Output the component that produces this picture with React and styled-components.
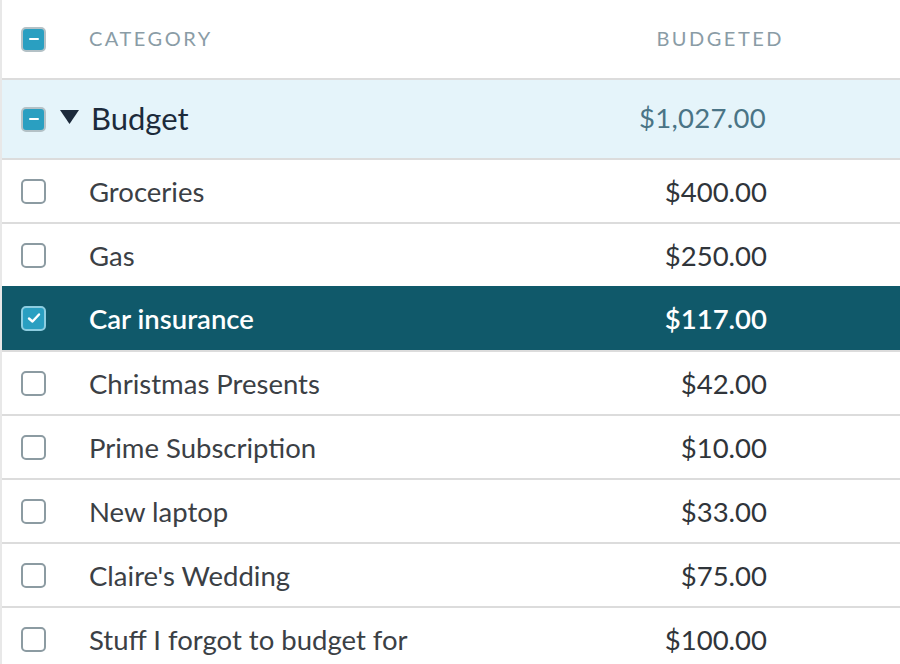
import React from 'react'
import styled, { createGlobalStyle } from 'styled-components'

const Global = createGlobalStyle`
  body {
    margin: 0;
    background: #fff;
    font-family: Lato, "Open Sans", sans-serif;
  }
`

const items = [
  { name: 'Groceries', amount: '$400.00' },
  { name: 'Gas', amount: '$250.00' },
  { name: 'Car insurance', amount: '$117.00', selected: true },
  { name: 'Christmas Presents', amount: '$42.00' },
  { name: 'Prime Subscription', amount: '$10.00' },
  { name: 'New laptop', amount: '$33.00' },
  { name: "Claire's Wedding", amount: '$75.00' },
  { name: 'Stuff I forgot to budget for', amount: '$100.00' },
]

export default function App() {
  return (
    <>
      <Global />
      <Table>
        <HeaderRow>
          <Box $state="partial"><Minus /></Box>
          <HeadLabel>Category</HeadLabel>
          <HeadAmount>Budgeted</HeadAmount>
        </HeaderRow>
        <GroupRow>
          <Box $state="partial"><Minus /></Box>
          <Caret viewBox="0 0 19 14">
            <path d="M0 0 H19 L9.5 14 Z" fill="#1c2a3a" />
          </Caret>
          <GroupName>Budget</GroupName>
          <GroupAmount>$1,027.00</GroupAmount>
        </GroupRow>
        {items.map((it) => (
          <ItemRow key={it.name} $selected={it.selected}>
            <Box $state={it.selected ? 'checked' : 'empty'}>
              {it.selected && (
                <svg width="14" height="12" viewBox="0 0 14 12">
                  <path d="M2 6.5 L5.5 9.5 L12 2.5" fill="none" stroke="#fff" strokeWidth="2.4" strokeLinecap="round" strokeLinejoin="round" />
                </svg>
              )}
            </Box>
            <ItemName $selected={it.selected}>{it.name}</ItemName>
            <ItemAmount $selected={it.selected}>{it.amount}</ItemAmount>
          </ItemRow>
        ))}
      </Table>
    </>
  )
}

const Table = styled.div`
  border-left: 2px solid #e8e8e8;
  min-height: 664px;
  box-sizing: border-box;
`

const Row = styled.div`
  display: flex;
  align-items: center;
  box-sizing: border-box;
  padding-left: 19px;
  border-bottom: 2px solid #dcdcdc;
`

const HeaderRow = styled(Row)`
  height: 80px;
`

const GroupRow = styled(Row)`
  height: 80px;
  background: #e5f4fa;
`

const ItemRow = styled(Row)`
  height: 64px;
  background: ${({ $selected }) => ($selected ? '#10596a' : '#fff')};
  ${({ $selected }) => $selected && 'margin-top: -2px; height: 66px;'}
`

const boxStyles = {
  partial: 'background: #2a9fc1; border-color: #b4c1c6;',
  checked: 'background: #2a9fc1; border-color: #8dcde0;',
  empty: 'background: #fff; border-color: #8c9ba2;',
}

const Box = styled.div`
  width: 25px;
  height: 25px;
  box-sizing: border-box;
  border: 2px solid;
  border-radius: 5px;
  display: flex;
  align-items: center;
  justify-content: center;
  flex-shrink: 0;
  ${({ $state }) => boxStyles[$state]}
`

const Minus = styled.span`
  width: 10px;
  height: 2px;
  background: #fff;
  border-radius: 1px;
`

const HeadLabel = styled.div`
  margin-left: 43px;
  margin-top: -2px;
  font-size: 20px;
  letter-spacing: 2.5px;
  text-transform: uppercase;
  color: #8a9ca6;
  flex: 1;
`

const HeadAmount = styled(HeadLabel)`
  flex: none;
  margin-left: 0;
  margin-right: 116px;
`

const Caret = styled.svg`
  width: 19px;
  height: 14px;
  margin-left: 14px;
  margin-top: -4px;
`

const GroupName = styled.div`
  margin-left: 12px;
  margin-top: -3px;
  font-size: 31px;
  color: #1c2a3a;
  flex: 1;
`

const GroupAmount = styled.div`
  font-size: 27.5px;
  letter-spacing: 0.3px;
  color: #4a7486;
  margin-right: 134px;
  margin-top: -3px;
`

const ItemName = styled.div`
  margin-left: 43px;
  font-size: 27.5px;
  font-weight: ${({ $selected }) => ($selected ? 600 : 400)};
  color: ${({ $selected }) => ($selected ? '#fff' : '#3b4045')};
  flex: 1;
`

const ItemAmount = styled.div`
  font-size: 27.5px;
  font-weight: ${({ $selected }) => ($selected ? 600 : 400)};
  color: ${({ $selected }) => ($selected ? '#fff' : '#30353a')};
  margin-right: 133px;
`
